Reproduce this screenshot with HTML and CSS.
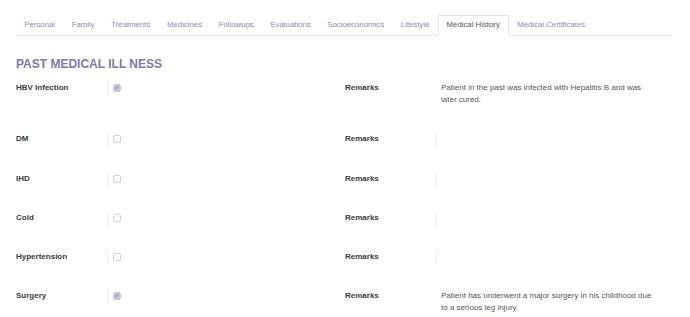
FILE: index.html
```html
<!DOCTYPE html>
<html lang="en">
<head>
<meta charset="UTF-8">
<meta name="viewport" content="width=device-width, initial-scale=1.0">
<title>Medical History</title>
<link rel="stylesheet" href="styles.css">
</head>
<body>

<div class="record-container">
  <ul class="tab-bar">
    <li class="tab">Personal</li>
    <li class="tab">Family</li>
    <li class="tab">Treatments</li>
    <li class="tab">Medicines</li>
    <li class="tab">Followups</li>
    <li class="tab">Evaluations</li>
    <li class="tab">Socioeconomics</li>
    <li class="tab">Lifestyle</li>
    <li class="tab active">Medical History</li>
    <li class="tab">Medical Certificates</li>
  </ul>

  <h2 class="section-title">PAST MEDICAL ILL NESS</h2>

  <div class="field-row">
    <div class="field-label">HBV Infection</div>
    <div class="field-value"><span class="check checked"></span></div>
    <div class="field-label">Remarks</div>
    <div class="field-value remark">Patient in the past was infected with Hepatitis B and was later cured.</div>
  </div>

  <div class="field-row">
    <div class="field-label">DM</div>
    <div class="field-value"><span class="check"></span></div>
    <div class="field-label">Remarks</div>
    <div class="field-value remark"></div>
  </div>

  <div class="field-row">
    <div class="field-label">IHD</div>
    <div class="field-value"><span class="check"></span></div>
    <div class="field-label">Remarks</div>
    <div class="field-value remark"></div>
  </div>

  <div class="field-row">
    <div class="field-label">Cold</div>
    <div class="field-value"><span class="check"></span></div>
    <div class="field-label">Remarks</div>
    <div class="field-value remark"></div>
  </div>

  <div class="field-row">
    <div class="field-label">Hypertension</div>
    <div class="field-value"><span class="check"></span></div>
    <div class="field-label">Remarks</div>
    <div class="field-value remark"></div>
  </div>

  <div class="field-row">
    <div class="field-label">Surgery</div>
    <div class="field-value"><span class="check checked"></span></div>
    <div class="field-label">Remarks</div>
    <div class="field-value remark">Patient has underwent a major surgery in his childhood due to a serious leg injury.</div>
  </div>
</div>

</body>
</html>
```

FILE: styles.css
```css
body {
  font-family: 'Liberation Sans', Arial, sans-serif;
  background-color: #fff;
  margin: 0;
  padding: 15px 18px 0 16px;
}
.tab-bar {
  display: flex;
  list-style: none;
  margin: 0;
  padding: 0;
  border-bottom: 1px solid #e6e6e6;
}
.tab {
  font-size: 7.8px;
  line-height: 18px;
  padding: 0 7.3px;
  color: #8b89b3;
  border: 1px solid transparent;
  border-bottom: none;
  margin-bottom: -1px;
  height: 19px;
}
.tab.active {
  color: #555;
  background-color: #fff;
  border-color: #e2e2e2;
  border-bottom: 1px solid #fff;
  padding: 0 8px;
}
.section-title {
  font-size: 12px;
  line-height: 14px;
  font-weight: bold;
  color: #7b7aac;
  margin: 21px 0 9px 0;
}
.field-row {
  display: grid;
  grid-template-columns: 91px 238px 91px 1fr;
  align-items: start;
  margin-bottom: 23.3px;
}
.field-row:last-child {
  margin-bottom: 0;
}
.field-label {
  font-size: 8px;
  font-weight: bold;
  line-height: 16px;
  color: #3a3a3a;
}
.field-value {
  border-left: 1px solid #ececec;
  min-height: 16px;
  padding-left: 5px;
  display: flex;
  align-items: center;
}
.field-value.remark {
  display: block;
  width: 214px;
  font-size: 8px;
  line-height: 12px;
  color: #555;
  padding: 2px 0 0 4px;
  min-height: 14px;
}
.field-value.remark:not(:empty) {
  border-left-color: #fff;
  padding-bottom: 2px;
}
.check {
  display: inline-block;
  width: 6px;
  height: 6px;
  border: 1px solid #d2d2d2;
  border-radius: 2px;
  background-color: #fff;
  position: relative;
}
.check.checked {
  background-color: #c9c7de;
  border-color: #c9c7de;
}
.check.checked::after {
  content: "";
  position: absolute;
  left: 2px;
  top: 0px;
  width: 1px;
  height: 3px;
  border-right: 1px solid #8a88b3;
  border-bottom: 1px solid #8a88b3;
  transform: rotate(45deg);
}
```
